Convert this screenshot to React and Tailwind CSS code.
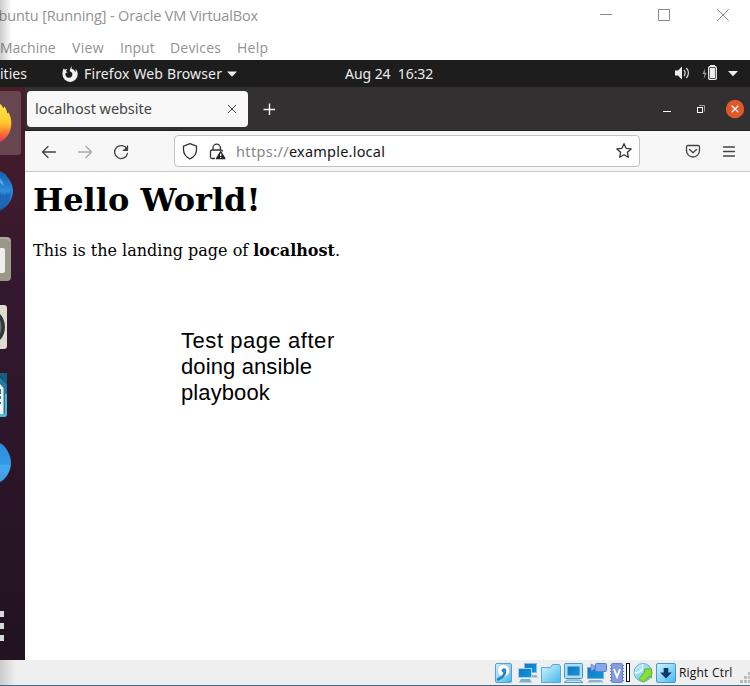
import React from "react";

function TitleBar() {
  return (
    <div className="flex h-8 items-center justify-between bg-white font-['Open_Sans','Noto_Sans',sans-serif] text-[#929292]">
      <div className="flex w-[258px] justify-end whitespace-nowrap text-[14.5px] tracking-[-0.15px]">
        <span className="shrink-0">buntu [Running] - Oracle VM VirtualBox</span>
      </div>
      <svg className="h-8 w-[150px]" viewBox="600 0 150 32" fill="none" stroke="#8a8a8a" strokeWidth="1">
        <path d="M600 14.5h12M658.5 9.5h11v11h-11zM717.3 9.3l11.4 11.4M728.7 9.3l-11.4 11.4" />
      </svg>
    </div>
  );
}

function MenuBar() {
  return (
    <div className="flex h-7 items-center bg-white pt-[2px] font-['Open_Sans','Noto_Sans',sans-serif] text-[14px] text-[#929292]">
      <span className="w-[72px] whitespace-nowrap">Machine</span>
      <span className="w-12 tracking-[0.3px]">View</span>
      <span className="w-[50px]">Input</span>
      <span className="w-[67px] tracking-[0.2px]">Devices</span>
      <span className="tracking-[0.3px]">Help</span>
    </div>
  );
}

function GnomeBar() {
  return (
    <div className="flex h-[27px] items-center bg-[#1d1d1d] font-['Noto_Sans',sans-serif] text-[14px] text-[#ececec]">
      <span className="w-[61px] whitespace-nowrap">ities</span>
      <svg className="h-[18px] w-[23px]" viewBox="61 64 23 18">
        <path fill="#f2f2f2" d="M72 65.3l-.6 2.500c2 .3 3.600 1.500 3.700 3.500.8-.8.8-2 .4-3.300 1.500 1.200 2.200 3 2.200 5.200a7.600 7.600 0 0 1-15.200.3c-.1-2.500.3-4.600 1.400-6.300l.8 1.600c.8-.6 1.800-.9 2.800-.8l-1.800 2 1.800 1.300-1.900.7c-.5 1.500 0 3.600 1.700 4.400 2.500 1.200 5-.3 5.100-2.900 0-1.600-1-2.800-2.600-3.200 0-2 .8-3.800 2.200-5z" />
      </svg>
      <span className="w-[143px] whitespace-nowrap tracking-[0.14px]">Firefox Web Browser</span>
      <svg className="h-[6px] w-[10px]" viewBox="0 0 10 6">
        <path d="M0 .5h10L5 5.7z" fill="#eee" />
      </svg>
      <span className="ml-[108px] whitespace-pre tracking-[-0.05px]">Aug 24  16:32</span>
      <svg className="ml-auto h-[27px] w-[80px]" viewBox="670 60 80 27">
        <path d="M675 70.500h3l4-4v13l-4-4h-3z" fill="#eee" />
        <path d="M684 70c1.500 1.500 1.500 4.500 0 6M686.300 68c2.800 2.800 2.800 7.200 0 10" fill="none" stroke="#ddd" strokeWidth="1.200" />
        <path d="M705 68.500l-2.500 5.500h2l-.8 5 3-6.200h-2z" fill="#999" />
        <path d="M710 65h5v2h-5z" fill="#eee" />
        <rect x="708.700" y="66.700" width="7.600" height="12.600" rx="1" fill="none" stroke="#eee" strokeWidth="1.300" />
        <path d="M710 68h5v10h-5z" fill="#eee" />
        <path d="M728 71h10l-5 5.200z" fill="#eee" />
      </svg>
    </div>
  );
}

function Dock() {
  return (
    <div className="w-[25px] shrink-0 bg-linear-to-b from-[#4a1c29] from-0% via-[#34182f] via-35% to-[#211321] to-100%">
      <svg className="h-[573px] w-[25px]" viewBox="0 87 25 573">
        <defs>
          <linearGradient id="fox" x1="0" y1="0" x2="0" y2="1">
            <stop offset="0" stopColor="#ffe64a" />
            <stop offset=".5" stopColor="#ffc92f" />
            <stop offset=".75" stopColor="#ff7a2f" />
            <stop offset="1" stopColor="#e63058" />
          </linearGradient>
          <linearGradient id="bird" x1="0" y1="0" x2="0" y2="1">
            <stop offset="0" stopColor="#175cad" />
            <stop offset=".5" stopColor="#2d8ddc" />
            <stop offset="1" stopColor="#1751a0" />
          </linearGradient>
          <linearGradient id="help" x1="0" y1="0" x2="0" y2="1">
            <stop offset="0" stopColor="#2c8ae0" />
            <stop offset=".55" stopColor="#329be6" />
            <stop offset=".56" stopColor="#45aaf0" />
            <stop offset="1" stopColor="#3e9be0" />
          </linearGradient>
        </defs>
        <path d="M0 91h18q3 0 3 3v58q0 3-3 3H0z" fill="#68464f" />
        <path d="M0 104c1.500 1 2.600 2.500 3.300 4.300l1.200-1.800c1.600 2.500 2.500 4.800 2.800 7.100l1.200-1.100c2 3.500 3 7.500 2.800 11.500-.3 8-4.600 15-11.300 18z" fill="url(#fox)" />
        <path d="M0 171c1.500.4 3 1.400 4 2.600h1.200l1.200 2.200c4 4.200 6.600 9.700 6.600 15.200 0 8-5 16-13 20z" fill="url(#bird)" />
        <path d="M0 192l2 3 1-2 2 3 2-4 1 3 3-5c0 9-5 16-11 19z" fill="#1f67b8" />
        <path d="M0 178l3 4 1 4-4-3z" fill="#4ba5e9" />
        <path d="M0 237h7q4 0 4 4v36q0 4-4 4H0z" fill="#9b9889" />
        <path d="M0 238h6q3 0 3.500 3" stroke="#bcb8aa" fill="none" />
        <path d="M0 248h3q2 0 2 2v21q0 2-2 2H0z" fill="#efefeb" />
        <path d="M0 305h4q3 0 3 3v38q0 3-3 3H0z" fill="#dedbd1" />
        <path d="M0 314c3 3 5 8 5 13s-2 10-5 13z" fill="#343638" />
        <path d="M0 320c2 4 2 10 0 14z" fill="#696d6f" />
        <path d="M0 373h7v10l-2-1-5-6z" fill="#12617f" />
        <path d="M0 377l7 7v30q0 3-3 3H0z" fill="#1c7ba7" />
        <path d="M5 394h2v20q0 3-3 3H0v-3h5z" fill="#51b6d8" />
        <path d="M0 384l3.500 4v26H0z" fill="#f3f7fa" />
        <path d="M0 389h1v5H0zM0 396h1v3H0zM0 402h1v2H0z" fill="#396c94" />
        <path d="M0 443c6 3 11 12 11 20s-5 16-11 19z" fill="url(#help)" />
        <path d="M0 611h4v6H0zM0 623h4v6H0zM0 635h4v6H0z" fill="#d9d8dc" />
      </svg>
    </div>
  );
}

function TabBar() {
  return (
    <div className="flex h-11 items-center border-b border-[#201e20] bg-[#323031]">
      <div className="ml-[2px] flex h-9 w-[221px] items-center justify-between rounded bg-[#f8f8f8] pt-px pl-2 pr-[11px] font-['Noto_Sans',sans-serif] text-[14.5px] text-[#444]">
        <span className="whitespace-nowrap tracking-[-0.05px]">localhost website</span>
        <svg className="size-[10px]" viewBox="0 0 10 10" stroke="#444" strokeWidth="1">
          <path d="M1 1l8 8M9 1L1 9" />
        </svg>
      </div>
      <svg className="ml-[15px] size-3" viewBox="0 0 12 12" stroke="#f3f3f3" strokeWidth="1.400">
        <path d="M6.500 .5v12M.5 6.500h12" />
      </svg>
      <svg className="ml-auto h-[43px] w-[90px]" viewBox="660 87 90 43" fill="none">
        <path d="M663 111.500h8" stroke="#fff" />
        <path d="M699 105.500h5.500v6" stroke="#999" />
        <rect x="697.500" y="107.500" width="5" height="5" stroke="#fff" />
        <circle cx="735" cy="109" r="9.200" fill="#e15829" />
        <path d="M731.700 105.700l6.600 6.600M738.300 105.700l-6.600 6.600" stroke="#fff" strokeWidth="1.300" />
      </svg>
    </div>
  );
}

function Toolbar() {
  return (
    <div className="flex h-[41px] items-center border-b border-[#c6c6c8] bg-[#f7f7f7]">
      <svg className="h-10 w-[149px]" viewBox="25 131 149 40" fill="none" strokeWidth="1.300" strokeLinecap="round" strokeLinejoin="round">
        <path d="M55.500 152H42.500M48 146.500l-5.500 5.500 5.500 5.500" stroke="#444" />
        <path d="M78.500 152H91.500M86 146.500l5.500 5.500-5.500 5.500" stroke="#aaa" />
        <path d="M127 149.300a6.500 6.500 0 1 0 .5 4M127.500 146v4.300h-4.300" stroke="#444" />
        <path d="M128 145.500v5h-5z" fill="#444" />
      </svg>
      <div className="flex h-8 w-[466px] items-center rounded border border-[#c2c2c5] bg-white">
        <svg className="h-[30px] w-[61px]" viewBox="175 136 61 30" fill="none" stroke="#333" strokeWidth="1.300" strokeLinejoin="round">
          <path d="M190 143.700l6.500 2.500v3.300c0 4.400-2.700 7.600-6.500 9.300-3.800-1.700-6.500-4.900-6.500-9.300v-3.300z" />
          <path d="M213 150v-2.200a3.700 3.700 0 0 1 7.400 0v2.200M215 158.500h-3a1.500 1.500 0 0 1-1.500-1.500v-5.500q0-1.500 1.500-1.500h9q1.500 0 1.500 1.500" />
          <path d="M220.700 151.700l4.200 7h-8.400z" fill="#222" stroke="#222" />
          <path d="M220.700 153.500v2.500M220.700 157v1" stroke="#fff" />
        </svg>
        <span className="pt-px whitespace-nowrap font-['Noto_Sans',sans-serif] text-[14.5px] tracking-[0.37px] text-[#858585]">
          https://<span className="tracking-[0.22px] text-[#151515]">example.local</span>
        </span>
        <svg className="ml-auto mr-[6px] size-[18px]" viewBox="615 142 18 18" fill="none" stroke="#333" strokeWidth="1.300" strokeLinejoin="round">
          <path d="M624 143.700l2.100 4.600 5 .6-3.700 3.400 1 5-4.400-2.500-4.400 2.500 1-5-3.700-3.400 5-.6z" />
        </svg>
      </div>
      <svg className="ml-auto h-10 w-[70px]" viewBox="680 131 70 40" fill="none" stroke="#444" strokeWidth="1.300" strokeLinecap="round" strokeLinejoin="round">
        <path d="M688 145.500h10q1.500 0 1.500 1.500v3.500a6.500 6.500 0 0 1-13 0V147q0-1.500 1.500-1.500zM689.500 149.500l3.500 3.300 3.500-3.300M723.500 147h11M723.500 151.500h11M723.500 156h11" />
      </svg>
    </div>
  );
}

function PageContent() {
  return (
    <div className="flex-1 bg-white px-2 font-['DejaVu_Serif',serif] text-black">
      <h1 className="pt-2 text-[32px] leading-10 font-bold whitespace-nowrap">Hello World!</h1>
      <p className="mt-[19px] text-[16px] leading-6 whitespace-nowrap">
        This is the landing page of <b>localhost</b>.
      </p>
      <p className="mt-[65px] ml-[148px] flex flex-col font-['Liberation_Sans',Arial,sans-serif] text-[22px] leading-[26px] whitespace-nowrap">
        <span className="tracking-[0.55px]">Test page after</span>
        <span className="tracking-[0.12px]">doing ansible</span>
        <span className="tracking-[0.1px]">playbook</span>
      </p>
    </div>
  );
}

function StatusBar() {
  return (
    <div className="flex h-[26px] items-center border-b border-[#416b8d] bg-[#efefef]">
      <svg className="ml-[490px] h-[25px] w-[189px] shrink-0" viewBox="490 660 189 25" strokeWidth="1">
        <defs>
          <linearGradient id="cyan" x1="0" y1="0" x2="1" y2="1">
            <stop stopColor="#d5f5ff" />
            <stop offset="1" stopColor="#42b8ed" />
          </linearGradient>
          <linearGradient id="screen" x1="0" y1="0" x2="1" y2="1">
            <stop stopColor="#1573c4" />
            <stop offset="1" stopColor="#0a9be0" />
          </linearGradient>
        </defs>
        <rect x="495.500" y="663.500" width="16" height="19" rx="1.500" fill="url(#cyan)" stroke="#5b9dc9" />
        <circle cx="503.500" cy="670.500" r="6.200" fill="#fff" stroke="#9ccbe4" />
        <path d="M505 672.500c-1 3-3.500 5.500-7 7" stroke="#287fb9" strokeWidth="2.500" fill="none" strokeLinecap="round" />
        <circle cx="504" cy="670.500" r="2.300" fill="#2b86c4" />
        <rect x="524.500" y="663.500" width="12" height="9" fill="url(#screen)" stroke="#86bcdd" />
        <path d="M532 675h4.500l1.500 2.500h-6z" fill="#8ab8d8" />
        <rect x="518.500" y="668.500" width="13" height="9" fill="url(#screen)" stroke="#a5d4ec" />
        <path d="M521 679h9l2 3.500h-13z" fill="#7cafd3" />
        <path d="M541.500 682.500v-15h9l2-3h7l1 2v16z" fill="url(#cyan)" stroke="#5ca9d4" />
        <rect x="564.500" y="663.500" width="18" height="15" rx="1" fill="#a9def5" stroke="#4798c6" />
        <rect x="568" y="667" width="11" height="8" fill="url(#screen)" stroke="#267fae" />
        <path d="M567 680h13l3 2.500h-19z" fill="#c2e5f4" stroke="#579abf" />
        <rect x="587.500" y="667.500" width="16" height="11" fill="url(#screen)" stroke="#76add1" />
        <path d="M589.500 680h12l2 2.500h-16z" fill="#85b6d6" />
        <rect x="595.500" y="663.500" width="11" height="8" rx="1" fill="#86a9e8" stroke="#557fcb" />
        <path d="M595 666l-4-2v7l4-2z" fill="#8eaee8" stroke="#557fcb" strokeWidth=".6" />
        <path d="M610 665.500h14M610 668.500h14M610 671.500h14M610 674.500h14M610 677.500h14M610 680.500h14" stroke="#5b75b8" />
        <rect x="611.500" y="663.500" width="11" height="19" rx="1" fill="#869cdf" stroke="#6783cc" />
        <path d="M614 669l3 8 3-8" fill="none" stroke="#fff" strokeWidth="1.800" />
        <rect x="626.500" y="663.500" width="3" height="18" fill="#fff" stroke="#111" />
        <circle cx="643" cy="672.500" r="9" fill="url(#cyan)" stroke="#5bb4d8" />
        <path d="M642.500 664v5.500M634.500 673c4 0 6-1 8-4" stroke="#eafaff" fill="none" strokeWidth="1.500" />
        <path d="M644.500 669h7v9l-2.500-2-5.500 6.500-4.500-4 5.500-6z" fill="#8ddd33" stroke="#62b52c" />
        <rect x="656.500" y="663.500" width="19" height="19" rx="1.500" fill="url(#cyan)" stroke="#4999c5" />
        <path d="M663.700 668h4.600v4.500h3.500l-5.800 6-5.800-6h3.500z" fill="#0c3667" />
      </svg>
      <span className="w-[54px] whitespace-nowrap font-['Open_Sans','Noto_Sans',sans-serif] text-[12px] tracking-[0.2px] text-[#111]">Right Ctrl</span>
      <svg className="ml-auto h-[25px] w-[12px]" viewBox="738 660 12 25" fill="#bbb">
        <path d="M748 672h2v3h-2zM744 676h3v3h-3zM748 676h2v3h-2zM740 680h3v3h-3zM744 680h3v3h-3zM748 680h2v3h-2z" />
      </svg>
    </div>
  );
}

export default function App() {
  return (
    <div className="relative flex h-[686px] w-[750px] flex-col overflow-hidden bg-white">
      <TitleBar />
      <MenuBar />
      <GnomeBar />
      <div className="flex min-h-0 flex-1">
        <Dock />
        <div className="flex min-w-0 flex-1 flex-col">
          <TabBar />
          <Toolbar />
          <PageContent />
        </div>
      </div>
      <StatusBar />
      <div className="absolute top-0 left-0 h-[60px] w-3 bg-linear-to-r from-black/20 to-transparent" />
      <div className="absolute bottom-px left-0 h-[25px] w-4 bg-linear-to-r from-black/15 to-transparent" />
    </div>
  );
}
